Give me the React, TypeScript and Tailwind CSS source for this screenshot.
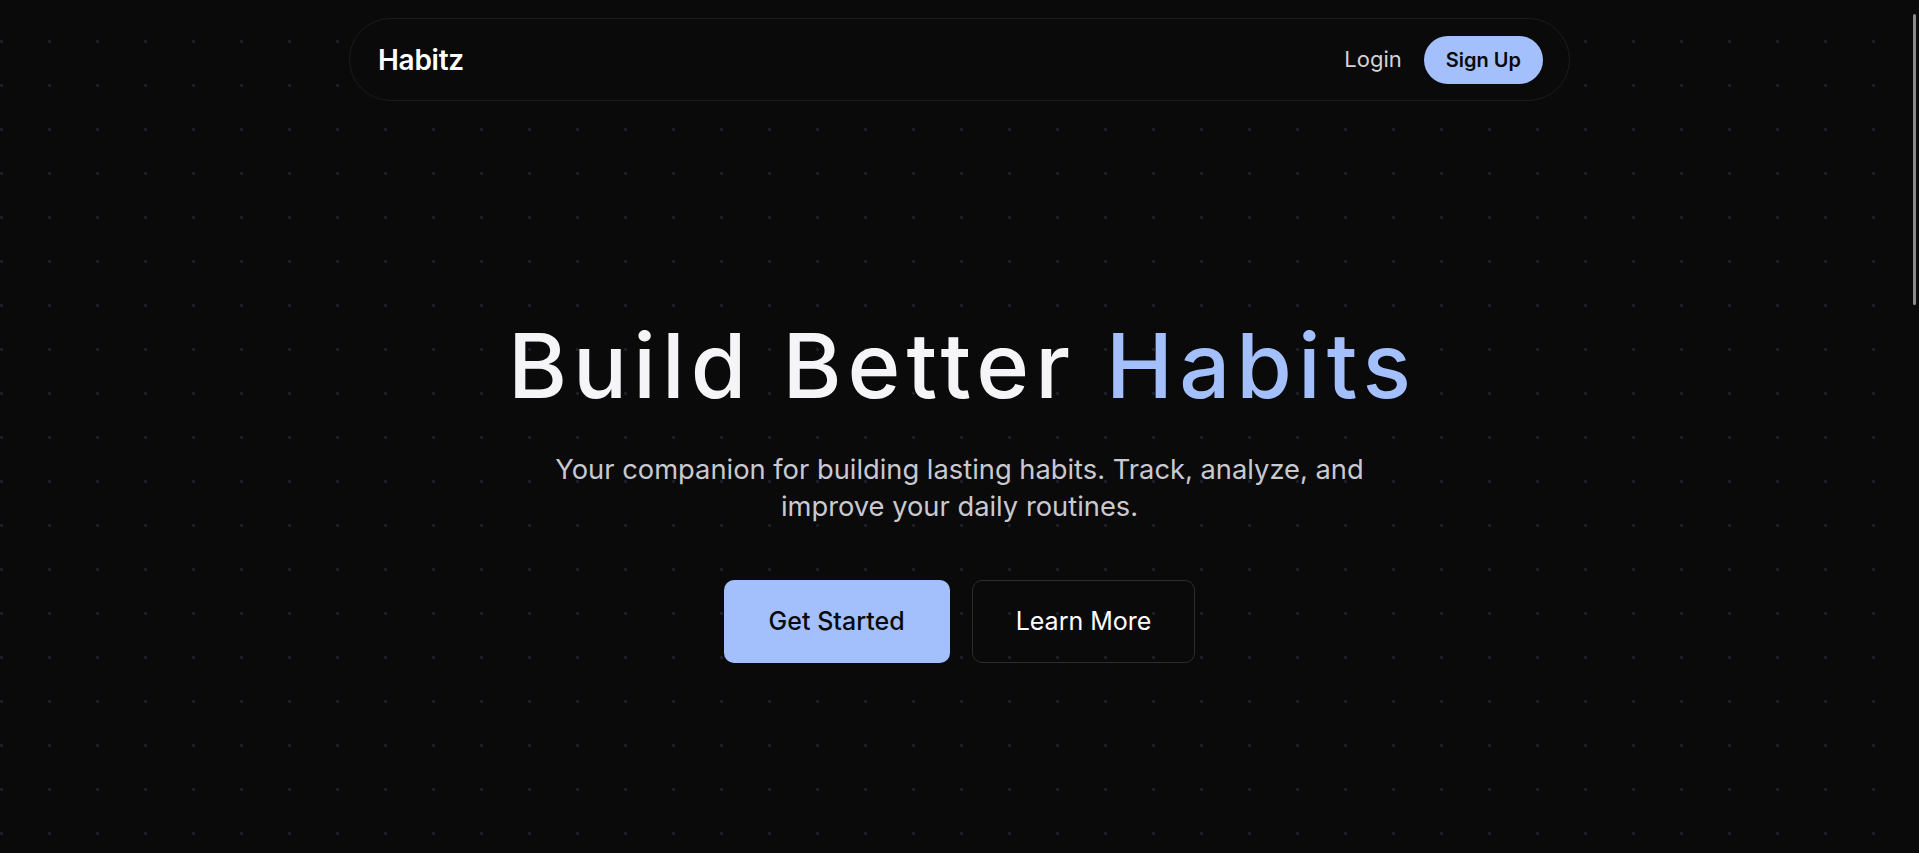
import React from 'react';

const Navbar: React.FC = () => {
  return (
    <header className="flex justify-center pt-[18px]">
      <nav className="flex items-center justify-between w-[1221px] h-[83px] pl-7 pr-[26px] rounded-full border border-[#1c1c21] bg-[#0a0a0b]">
        <a href="#" className="text-[28px] leading-none font-semibold text-white tracking-[-0.01em]">
          Habitz
        </a>
        <div className="flex items-center gap-[22px]">
          <button className="text-[22px] text-[#d4d4d8] hover:text-white transition-colors">Login</button>
          <button className="h-12 px-[22px] rounded-full bg-[#a4c0fc] text-[20px] font-semibold text-[#0a0a0b] hover:bg-[#b4cbfd] transition-colors">
            Sign Up
          </button>
        </div>
      </nav>
    </header>
  );
};

const Hero: React.FC = () => {
  return (
    <section className="flex flex-col items-center text-center pt-[220px]">
      <h1 className="text-[90px] leading-none font-medium tracking-[0.067em] text-[#f5f5f7] pl-[0.067em]">
        Build Better <span className="text-[#a4c0fc]">Habits</span>
      </h1>
      <p className="mt-10 max-w-[860px] text-[27.3px] leading-[37px] text-[#c9c9d0]">
        Your companion for building lasting habits. Track, analyze, and improve your daily routines.
      </p>
      <div className="mt-[55px] flex items-center gap-[22px]">
        <button className="px-[45px] py-6 rounded-[10px] bg-[#a4c0fc] text-[25px] leading-[35px] font-medium text-[#0a0a0b] hover:bg-[#b4cbfd] transition-colors">
          Get Started
        </button>
        <button className="px-[43px] py-[23px] rounded-[10px] border border-[#2c2c31] text-[25px] leading-[35px] font-normal text-white hover:bg-white/5 transition-colors">
          Learn More
        </button>
      </div>
    </section>
  );
};

export default function App() {
  return (
    <div
      className="min-h-screen bg-[#0a0a0b] bg-[radial-gradient(circle_at_1.5px_41.5px,#20202b_1.3px,transparent_1.6px)] bg-[length:48px_44px] font-['Inter','Noto_Sans',sans-serif] antialiased"
    >
      <Navbar />
      <Hero />
      {/* overlay scrollbar thumb */}
      <div aria-hidden className="fixed right-[3px] top-[14px] w-[3px] h-[291px] rounded-full bg-[#8c8c8c]" />
    </div>
  );
}
